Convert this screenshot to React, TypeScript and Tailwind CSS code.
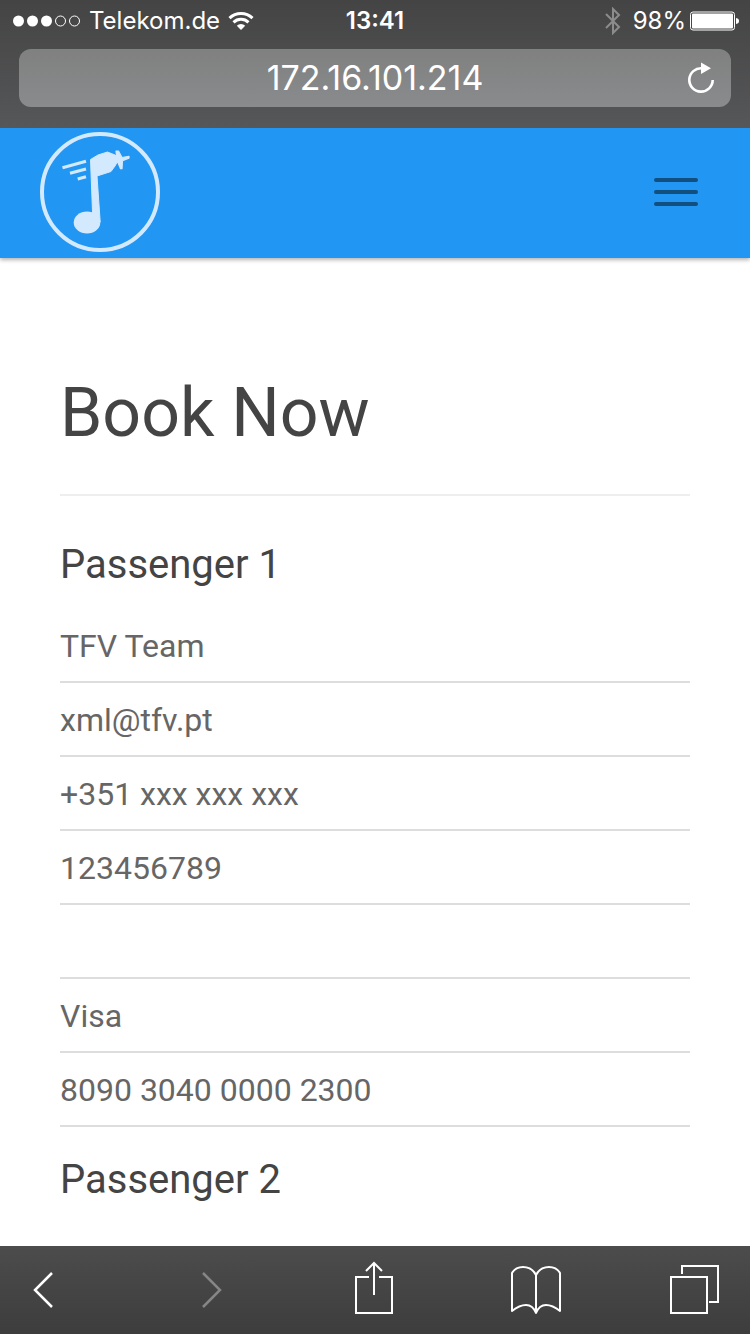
import { useState } from "react";

const passengerOne = [
  { label: "Name", type: "text", value: "TFV Team" },
  { label: "Email", type: "email", value: "xml@tfv.pt" },
  { label: "Phone", type: "tel", value: "+351 xxx xxx xxx" },
  { label: "Tax number", type: "text", value: "123456789" },
  { label: "Address", type: "text", value: "" },
  { label: "Card type", type: "text", value: "Visa" },
  { label: "Card number", type: "text", value: "8090 3040 0000 2300" },
];

function StatusBar() {
  return (
    <div className="grid grid-cols-3 items-center h-10 px-3 pt-0.5 text-2xl leading-8">
      <div className="flex items-center gap-2">
        <svg className="shrink-0" width="69" height="14" viewBox="0 0 69 14" fill="#fff" stroke="#fff">
          <circle cx="6.5" cy="7" r="5.5" stroke="none" />
          <circle cx="20.5" cy="7" r="5.5" stroke="none" />
          <circle cx="34.5" cy="7" r="5.5" stroke="none" />
          <circle cx="48.5" cy="7" r="5" fill="none" />
          <circle cx="62.5" cy="7" r="5" fill="none" />
        </svg>
        <span>Telekom.de</span>
        <svg className="shrink-0" width="26" height="20" viewBox="0 0 26 20" fill="none" stroke="#fff" strokeWidth="3">
          <path d="M1.5 7.2a16.5 16.5 0 0 1 23 0" />
          <path d="M5.5 11.4a10.8 10.8 0 0 1 15 0" />
          <path d="M13 19l-4.2-4.3a6.2 6.2 0 0 1 8.400 0z" fill="#fff" stroke="none" />
        </svg>
      </div>
      <span className="text-center font-semibold">13:41</span>
      <div className="flex items-center justify-end gap-1 -mr-0.5">
        <svg className="mr-2" width="16" height="28" viewBox="0 0 16 28" fill="none" stroke="#8c8c8c" strokeWidth="2">
          <path d="M1 7l13 13-6 6V2l6 6L1 21" />
        </svg>
        <span>98%</span>
        <svg width="50" height="20" viewBox="0 0 50 20">
          <rect x="0.5" y="1" width="44" height="18" rx="2.5" fill="none" stroke="#fff" />
          <rect x="2" y="2.5" width="41" height="15" rx="1" fill="#fff" />
          <path d="M46 7c2.4.4 3 1.500 3 3s-.6 2.600-3 3z" fill="#fff" />
        </svg>
      </div>
    </div>
  );
}

function AddressBar() {
  const [url, setUrl] = useState("172.16.101.214");

  return (
    <div className="flex items-center mx-[19px] mt-[9px] h-[58px] pl-15 pr-4 rounded-xl bg-gradient-to-b from-[#7f807f] to-[#8a8b8d]">
      <input
        type="text"
        aria-label="Address"
        value={url}
        onChange={(e) => setUrl(e.target.value)}
        className="flex-1 min-w-0 bg-transparent text-center text-[34px] leading-10 focus:outline-none"
      />
      <button aria-label="Reload" className="w-11 flex justify-end">
        <svg width="28" height="32" viewBox="0 0 28 32" fill="none" stroke="#fff" strokeWidth="2.6">
          <path d="M15 6.300A11.700 11.700 0 1 0 25.700 18" />
          <path d="M14 0.500v11.500l10-5.700z" fill="#fff" stroke="none" />
        </svg>
      </button>
    </div>
  );
}

function Logo() {
  return (
    <svg width="120" height="120" viewBox="0 0 120 120" fill="#d3e9fd" stroke="#d3e9fd">
      <circle cx="60" cy="60" r="58" fill="none" strokeWidth="4" />
      <ellipse cx="47" cy="90.500" rx="13.300" ry="11" stroke="none" />
      <path
        d="M50.500 27.500L58 23 67.500 20l7.500 3 4 4-4 7-4 5.500-14 4.500 3.200 46-6.200 1-1.500-11z"
        strokeWidth="1"
        strokeLinejoin="round"
      />
      <path
        d="M76 19l2.500 0 3.500 6.500 7-1.200v1.800l-6.500 2.600-.5 8h-1.500l-2.500-6-3-1 1.500-5z"
        strokeWidth="1.200"
        strokeLinejoin="round"
      />
      <path d="M22.500 35.700L46 29.300M30 41.200L46 37M37.700 47L46 44.700" fill="none" strokeWidth="3.200" />
    </svg>
  );
}

function Navbar() {
  return (
    <nav className="relative flex items-center justify-between h-[130px] pl-10 pr-8 pb-0.5 bg-[#2196f3] shadow-[0_2px_4px_rgba(0,0,0,0.3)]">
      <a href="#" aria-label="Home">
        <Logo />
      </a>
      <button aria-label="Toggle navigation" className="flex flex-col gap-2 px-5 py-4">
        <span className="w-11 h-1 rounded-xs bg-[#124e7e]" />
        <span className="w-11 h-1 rounded-xs bg-[#124e7e]" />
        <span className="w-11 h-1 rounded-xs bg-[#124e7e]" />
      </button>
    </nav>
  );
}

function Toolbar() {
  return (
    <footer className="flex items-center justify-between h-[88px] shrink-0 pl-[22px] pr-6 bg-gradient-to-b from-[#4b4c4b] to-[#3d3d3d]">
      <button aria-label="Back" className="w-14 flex pl-2.5">
        <svg width="22" height="38" viewBox="0 0 22 38" fill="none" stroke="#fff" strokeWidth="2.500">
          <path d="M20 2L3 19l17 17" />
        </svg>
      </button>
      <button aria-label="Forward" disabled className="w-14 flex justify-center">
        <svg width="22" height="38" viewBox="0 0 22 38" fill="none" stroke="#868686" strokeWidth="2.500">
          <path d="M2 2l17 17L2 36" />
        </svg>
      </button>
      <button aria-label="Share" className="w-14 flex justify-center">
        <svg width="38" height="58" viewBox="0 0 38 58" fill="none" stroke="#fff" strokeWidth="2">
          <path d="M14 16H1v36h36V16H24" />
          <path d="M19 34V2M11 10l8-8 8 8" />
        </svg>
      </button>
      <button aria-label="Bookmarks" className="w-14 flex justify-center">
        <svg width="50" height="50" viewBox="0 0 50 50" fill="none" stroke="#fff" strokeWidth="2" strokeLinejoin="round">
          <path d="M25 10C22 4 17 2 12 2 7 2 3 4.500 1 8v38c5-4 10-6 14-6 5 0 8 3 10 8 2-5 5-8 10-8 4 0 9 2 14 6V8c-2-3.500-6-6-11-6-5 0-10 2-13 8z" />
          <path d="M25 10v38" />
        </svg>
      </button>
      <button aria-label="Tabs" className="w-14 flex">
        <svg width="50" height="52" viewBox="0 0 50 52" fill="none" stroke="#fff" strokeWidth="2">
          <path d="M1 13h36v36H1zM12 10V2h36v36h-9" />
        </svg>
      </button>
    </footer>
  );
}

export default function App() {
  const [fields, setFields] = useState(passengerOne);

  const update = (index: number, value: string) => {
    setFields(fields.map((f, i) => (i === index ? { ...f, value } : f)));
  };

  return (
    <div className="h-screen flex flex-col bg-white font-['Roboto',sans-serif] text-[#444]">
      <header className="shrink-0 h-32 bg-gradient-to-b from-[#444] to-[#565759] text-white font-['Inter',sans-serif]">
        <StatusBar />
        <AddressBar />
      </header>
      <div className="flex-1 min-h-0 overflow-hidden">
        <Navbar />
        <main className="px-[60px] pt-[117px]">
          <h1 className="text-[68px] leading-[76px]">Book Now</h1>
          <hr className="mt-[43px] mb-[47px] border-t-2 border-[#eee]" />
          <form>
            <h2 className="text-[40px] leading-[44px] mb-[22px]">Passenger 1</h2>
            {fields.map((field, i) => (
              <input
                key={field.label}
                type={field.type}
                aria-label={field.label}
                value={field.value}
                onChange={(e) => update(i, e.target.value)}
                className="block w-full h-[74px] pt-0.5 border-b-2 border-[#ddd] text-[32px] leading-10 text-[#666] focus:outline-none"
              />
            ))}
            <h2 className="text-[40px] leading-[44px] mt-[31px]">Passenger 2</h2>
          </form>
        </main>
      </div>
      <Toolbar />
    </div>
  );
}
